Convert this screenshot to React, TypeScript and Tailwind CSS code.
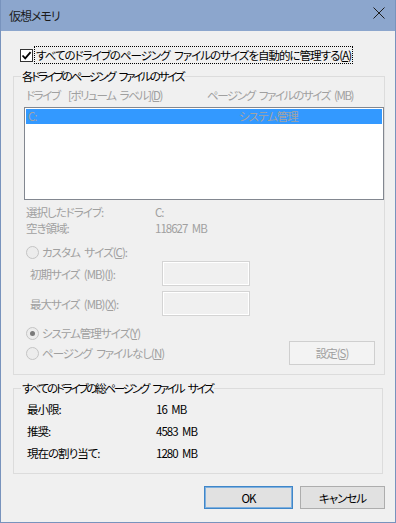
import { FC, PropsWithChildren } from 'react';

// disabled text colour used by the greyed-out controls
const dim = 'text-[#a0a0a0]';

const Key: FC<PropsWithChildren> = ({ children }) => (
  <span>(<span className="underline underline-offset-[1px]">{children}</span>)</span>
);

const Radio = ({ checked = false }: { checked?: boolean }) => (
  <span className="w-[13px] h-[13px] rounded-full border border-[#c4c4c4] bg-[#ececec] flex items-center justify-center shrink-0">
    {checked && <span className="w-[5px] h-[5px] rounded-full bg-[#7a7a7a]" />}
  </span>
);

const Group: FC<PropsWithChildren<{ title: string; className?: string }>> = ({ title, className = '', children }) => (
  <fieldset className={`border border-[#dcdcdc] w-[370px] ${className}`}>
    <legend className="ml-[7px] px-[1px] text-black tracking-[-2.2px] [word-spacing:4px]">{title}</legend>
    {children}
  </fieldset>
);

const App = () => {
  return (
    <div className="w-[396px] h-[523px] flex flex-col bg-[#f0f0f0] border-x border-b border-[#7893bd] text-[11.5px] leading-[16px] text-black font-['Noto_Sans_CJK_JP',sans-serif] [font-feature-settings:'palt'] tracking-[-1px] [word-spacing:3px]">
      <header className="h-[31px] shrink-0 bg-[#8ca6cd] flex items-center justify-between pl-[8px] pr-[10px]">
        <span className="text-[#1b1b1b] text-[12px]">仮想メモリ</span>
        <svg width="12" height="12" viewBox="0 0 12 12" className="self-start mt-[7px]">
          <path d="M0.5 0.5 L11.5 11.5 M11.5 0.5 L0.5 11.5" stroke="#1e1e1e" strokeWidth="1" fill="none" />
        </svg>
      </header>

      <main className="flex-1 flex flex-col px-[12px]">
        <div className="flex items-center h-[18px] mt-[15px] ml-[7px]">
          <span className="w-[13px] h-[13px] bg-white border border-[#333] flex items-center justify-center">
            <svg width="11" height="11" viewBox="0 0 11 11">
              <path d="M1.5 5.5 L4.2 8.3 L9.6 2.2" stroke="#000" strokeWidth="1.8" fill="none" />
            </svg>
          </span>
          <span className="ml-[1px] px-[1px] h-[18px] leading-[16px] border border-dotted border-black">
            すべてのドライブのページング ファイルのサイズを自動的に管理する<Key>A</Key>
          </span>
        </div>

        <Group title="各ドライブのページング ファイルのサイズ" className="mt-[4px] pb-[9px]">
          <div className={`flex mt-[3px] ml-[12px] tracking-[-1.4px] ${dim}`}>
            <span className="w-[181px]">ドライブ&nbsp;&nbsp;[ボリューム ラベル]<Key>D</Key></span>
            <span>ページング ファイルのサイズ (MB)</span>
          </div>

          <div className="mt-[4px] ml-[10px] w-[360px] h-[93px] bg-white border border-[#828790] p-[1px]">
            <div className="h-[15px] leading-[15px] bg-[#3399ff] flex pl-[2px] text-[#a3a3a3]">
              <span className="w-[211px]">C:</span>
              <span>システム管理</span>
            </div>
          </div>

          <div className={`mt-[4px] ml-[12px] ${dim}`}>
            <div className="flex"><span className="w-[129px]">選択したドライブ:</span><span>C:</span></div>
            <div className="flex"><span className="w-[129px]">空き領域:</span><span>118627 MB</span></div>
          </div>

          <div className={`flex items-center gap-[3px] mt-[8px] ml-[12px] ${dim}`}>
            <Radio />
            <span>カスタム サイズ<Key>C</Key>:</span>
          </div>

          <div className={`flex items-center h-[25px] mt-[1px] ml-[16px] ${dim}`}>
            <span className="w-[132px]">初期サイズ (MB)<Key>I</Key>:</span>
            <span className="w-[88px] h-[25px] border border-[#d4d4d4] shadow-[inset_0_0_0_1px_#ffffff] bg-[#f0f0f0]" />
          </div>
          <div className={`flex items-center h-[25px] mt-[5px] ml-[16px] ${dim}`}>
            <span className="w-[132px]">最大サイズ (MB)<Key>X</Key>:</span>
            <span className="w-[88px] h-[25px] border border-[#d4d4d4] shadow-[inset_0_0_0_1px_#ffffff] bg-[#f0f0f0]" />
          </div>

          <div className={`flex items-center gap-[3px] h-[16px] mt-[9px] ml-[12px] ${dim}`}>
            <Radio checked />
            <span>システム管理サイズ<Key>Y</Key></span>
          </div>
          <div className={`flex items-center h-[24px] ml-[12px] mr-[9px] ${dim}`}>
            <Radio />
            <span className="ml-[3px]">ページング ファイルなし<Key>N</Key></span>
            <span className="ml-auto w-[86px] h-[24px] flex items-center justify-center bg-[#f3f3f3] border border-[#cfcfcf]">
              設定<Key>S</Key>
            </span>
          </div>
        </Group>

        <Group title="すべてのドライブの総ページング ファイル サイズ" className="mt-[5px] pb-[9px]">
          <div className="mt-[2px] ml-[13px]">
            {[
              ['最小限:', '16 MB'],
              ['推奨:', '4583 MB'],
              ['現在の割り当て:', '1280 MB'],
            ].map(([k, v]) => (
              <div key={k} className="flex items-center h-[22px]">
                <span className="w-[129px]">{k}</span>
                <span>{v}</span>
              </div>
            ))}
          </div>
        </Group>

        <div className="flex justify-end gap-[7px] mt-[12px] -mr-[2px]">
          <button className="w-[89px] h-[23px] bg-[#e1e1e1] border border-[#3f86c9] shadow-[inset_0_0_0_1px_#7fb0de]">OK</button>
          <button className="w-[85px] h-[23px] bg-[#e1e1e1] border border-[#adadad]">キャンセル</button>
        </div>
      </main>
    </div>
  );
};

export default App;
